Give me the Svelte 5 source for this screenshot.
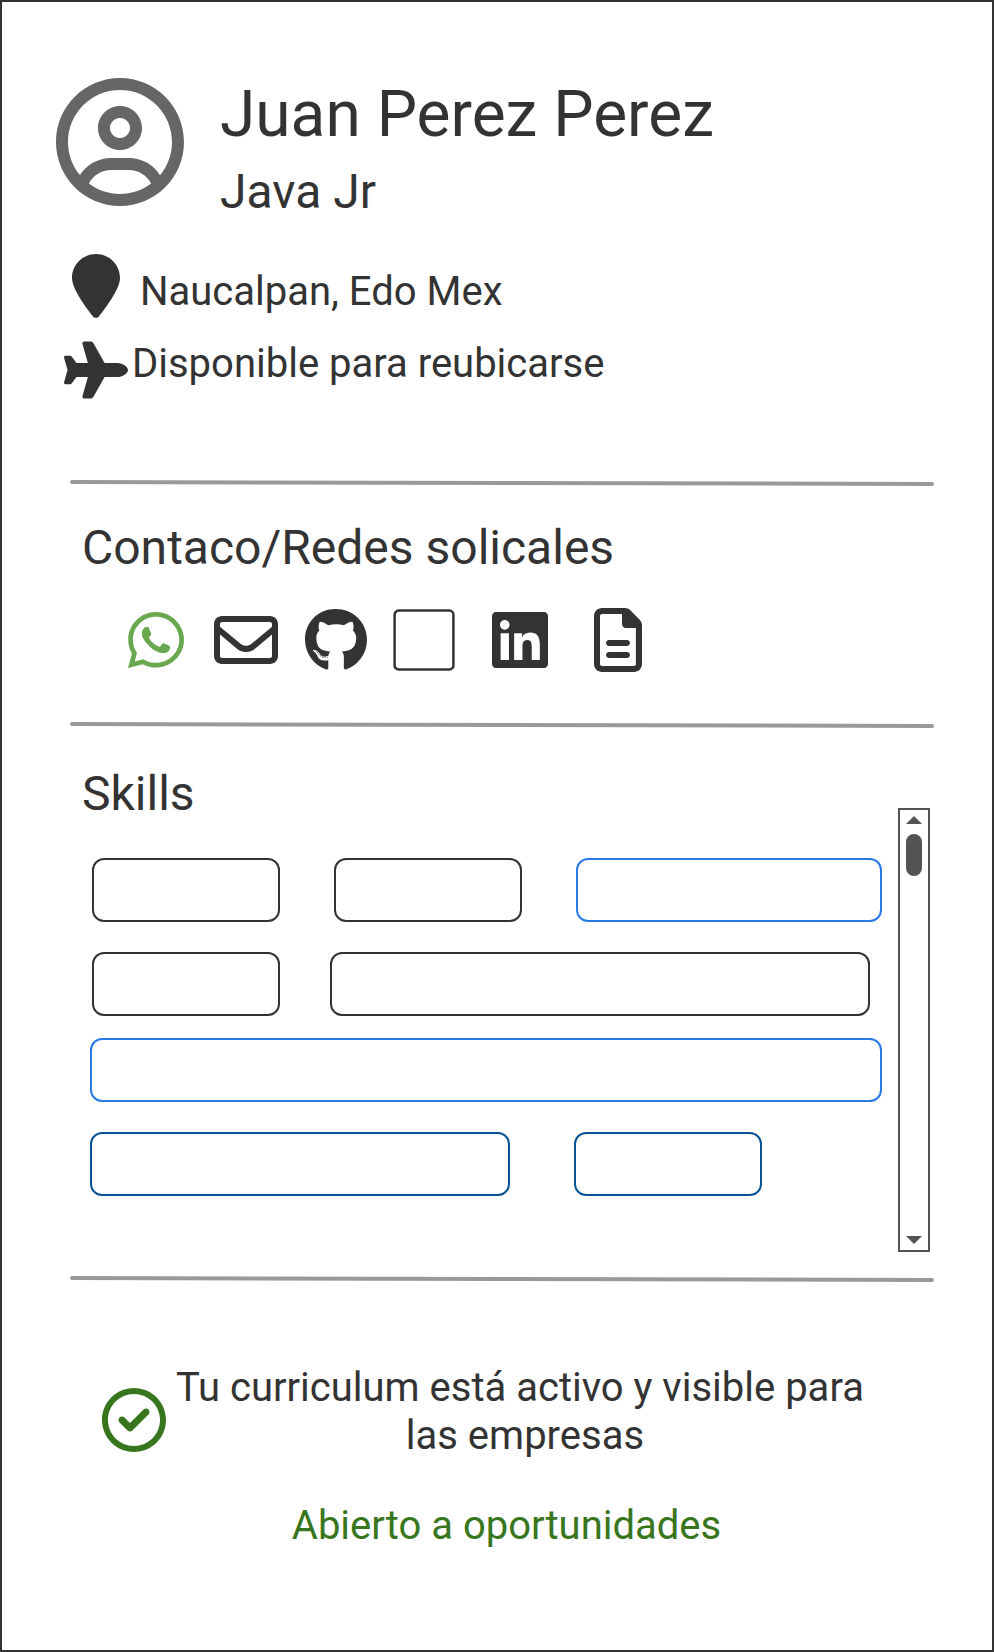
<script>
  const icons = {
    user: {
      box: '0 0 512 512',
      d: 'M256 112c-48.6 0-88 39.4-88 88C168 248.6 207.4 288 256 288s88-39.4 88-88C344 151.4 304.6 112 256 112zM256 240c-22.06 0-40-17.95-40-40C216 177.9 233.9 160 256 160s40 17.94 40 40C296 222.1 278.1 240 256 240zM256 0C114.6 0 0 114.6 0 256s114.6 256 256 256s256-114.6 256-256S397.4 0 256 0zM256 464c-46.73 0-89.76-15.68-124.5-41.79C148.8 389 182.4 368 220.2 368h71.69c37.75 0 71.31 21.01 88.68 54.21C345.8 448.3 302.7 464 256 464zM416.2 388.5C389.2 346.3 343.2 320 291.8 320H220.2c-51.36 0-97.35 26.25-124.4 68.48C65.96 352.5 48 306.3 48 256c0-114.7 93.31-208 208-208s208 93.31 208 208C464 306.3 446 352.5 416.2 388.5z'
    },
    pin: {
      box: '0 0 384 512',
      d: 'M384 192C384 279.4 267 435 215.7 499.2C203.4 514.5 180.6 514.5 168.3 499.2C116.1 435 0 279.4 0 192C0 85.96 85.96 0 192 0C298 0 384 85.96 384 192H384z'
    },
    plane: {
      box: '0 0 576 512',
      d: 'M482.3 192C516.5 192 576 221 576 256C576 292 516.5 320 482.3 320H365.7L265.2 495.9C259.5 505.8 248.9 512 237.4 512H181.2C170.6 512 162.9 501.8 165.8 491.6L214.9 320H112L68.8 377.6C65.78 381.6 61.04 384 56 384H14.03C6.284 384 0 377.7 0 369.1C0 368.7 .1818 367.4 .5398 366.1L32 256L.5398 145.9C.1818 144.6 0 143.3 0 142C0 134.3 6.284 128 14.03 128H56C61.04 128 65.78 130.4 68.8 134.4L112 192H214.9L165.8 20.4C162.9 10.17 170.6 0 181.2 0H237.4C248.9 0 259.5 6.153 265.2 16.12L365.7 192H482.3z'
    },
    whatsapp: {
      box: '0 0 448 512',
      d: 'M380.9 97.1C339 55.1 283.2 32 223.9 32c-122.4 0-222 99.6-222 222 0 39.1 10.2 77.3 29.6 111L0 480l117.7-30.9c32.4 17.7 68.9 27 106.1 27h.1c122.3 0 224.1-99.6 224.1-222 0-59.3-25.2-115-67.1-157zm-157 341.6c-33.2 0-65.7-8.9-94-25.7l-6.7-4-69.8 18.3L72 359.2l-4.4-7c-18.5-29.4-28.2-63.3-28.2-98.2 0-101.7 82.8-184.5 184.6-184.5 49.3 0 95.6 19.2 130.4 54.1 34.8 34.9 56.2 81.2 56.1 130.5 0 101.8-84.9 184.6-186.6 184.6zm101.2-138.2c-5.5-2.8-32.8-16.2-37.9-18-5.1-1.9-8.8-2.8-12.5 2.8-3.7 5.6-14.3 18-17.6 21.8-3.2 3.7-6.5 4.2-12 1.4-32.6-16.3-54-29.1-75.5-66-5.7-9.8 5.7-9.1 16.3-30.3 1.8-3.7.9-6.9-.5-9.7-1.4-2.8-12.5-30.1-17.1-41.2-4.5-10.8-9.1-9.3-12.5-9.5-3.2-.2-6.9-.2-10.6-.2-3.7 0-9.7 1.4-14.8 6.9-5.1 5.6-19.4 19-19.4 46.3 0 27.3 19.9 53.7 22.6 57.4 2.8 3.7 39.1 59.7 94.8 83.8 35.2 15.2 49 16.5 66.6 13.9 10.7-1.6 32.8-13.4 37.4-26.4 4.6-13 4.6-24.1 3.2-26.4-1.3-2.5-5-3.9-10.5-6.6z'
    },
    mail: {
      box: '0 0 512 512',
      d: 'M448 64H64C28.65 64 0 92.65 0 128v256c0 35.35 28.65 64 64 64h384c35.35 0 64-28.65 64-64V128C512 92.65 483.3 64 448 64zM64 112h384c8.822 0 16 7.178 16 16v22.16l-166.8 138.1c-23.19 19.28-59.34 19.27-82.47 .0156L48 150.2V128C48 119.2 55.18 112 64 112zM448 400H64c-8.822 0-16-7.178-16-16V212.7l136.1 113.4C204.3 342.8 229.8 352 256 352s51.75-9.188 71.97-25.98L464 212.7V384C464 392.8 456.8 400 448 400z'
    },
    github: {
      box: '0 0 496 512',
      d: 'M165.9 397.4c0 2-2.3 3.6-5.2 3.6-3.3.3-5.6-1.3-5.6-3.6 0-2 2.3-3.6 5.2-3.6 3-.3 5.6 1.3 5.6 3.6zm-31.1-4.5c-.7 2 1.3 4.3 4.3 4.9 2.6 1 5.6 0 6.2-2s-1.3-4.3-4.3-5.2c-2.6-.7-5.5.3-6.2 2.3zm44.2-1.7c-2.9.7-4.9 2.6-4.6 4.9.3 2 2.9 3.3 5.9 2.6 2.9-.7 4.9-2.6 4.6-4.6-.3-1.9-3-3.2-5.9-2.9zM244.8 8C106.1 8 0 113.3 0 252c0 110.9 69.8 205.8 169.5 239.2 12.8 2.3 17.3-5.6 17.3-12.1 0-6.2-.3-40.4-.3-61.4 0 0-70 15-84.7-29.8 0 0-11.4-29.1-27.8-36.6 0 0-22.9-15.7 1.6-15.4 0 0 24.9 2 38.6 25.8 21.9 38.6 58.6 27.5 72.9 20.9 2.3-16 8.8-27.1 16-33.7-55.9-6.2-112.3-14.3-112.3-110.5 0-27.5 7.6-41.3 23.6-58.9-2.6-6.5-11.1-33.3 2.6-67.9 20.9-6.5 69 27 69 27 20-5.6 41.5-8.5 62.8-8.5s42.8 2.9 62.8 8.5c0 0 48.1-33.6 69-27 13.7 34.7 5.2 61.4 2.6 67.9 16 17.7 25.8 31.5 25.8 58.9 0 96.5-58.9 104.2-114.8 110.5 9.2 7.9 17 22.9 17 46.4 0 33.7-.3 75.4-.3 83.6 0 6.5 4.6 14.4 17.3 12.1C428.2 457.8 496 362.9 496 252 496 113.3 383.5 8 244.8 8zM97.2 352.9c-1.3 1-1 3.3.7 5.2 1.6 1.6 3.9 2.3 5.2 1 1.3-1 1-3.3-.7-5.2-1.6-1.6-3.9-2.3-5.2-1zm-10.8-8.1c-.7 1.3.3 2.9 2.3 3.9 1.6 1 3.6.7 4.3-.7.7-1.3-.3-2.9-2.3-3.9-2-.6-3.6-.3-4.3.7zm32.4 35.6c-1.6 1.3-1 4.3 1.3 6.2 2.3 2.3 5.2 2.6 6.5 1 1.3-1.3.7-4.3-1.3-6.2-2.2-2.3-5.2-2.6-6.5-1zm-11.4-14.7c-1.6 1-1.6 3.6 0 5.9 1.6 2.3 4.3 3.3 5.6 2.3 1.6-1.3 1.6-3.9 0-6.2-1.4-2.3-4-3.3-5.6-2z'
    },
    linkedin: {
      box: '0 0 448 512',
      d: 'M416 32H31.9C14.3 32 0 46.5 0 64.3v383.4C0 465.5 14.3 480 31.9 480H416c17.6 0 32-14.5 32-32.3V64.3c0-17.8-14.4-32.3-32-32.3zM135.4 416H69V202.2h66.5V416zm-33.2-243c-21.3 0-38.5-17.3-38.5-38.5S80.9 96 102.2 96c21.2 0 38.5 17.3 38.5 38.5 0 21.3-17.2 38.5-38.5 38.5zm282.1 243h-66.4V312c0-24.8-.5-56.7-34.5-56.7-34.6 0-39.9 27-39.9 54.9V416h-66.4V202.2h63.7v29.2h.9c8.9-16.8 30.6-34.5 62.2-34.5 66.5 0 78.9 43.8 78.9 100.9V416z'
    },
    file: {
      box: '0 0 384 512',
      d: 'M365.3 93.38l-74.63-74.64C278.6 6.742 262.3 0 245.4 0H64C28.65 0 0 28.65 0 64l.0065 384c0 35.34 28.65 64 64 64H320c35.2 0 64-28.8 64-64V138.6C384 121.7 377.3 105.4 365.3 93.38zM336 448c0 8.836-7.164 16-16 16H64.02c-8.838 0-16-7.164-16-16L48 64.13c0-8.836 7.164-16 16-16h160L224 128c0 17.67 14.33 32 32 32h79.1V448zM96 280C96 293.3 106.8 304 120 304h144C277.3 304 288 293.3 288 280S277.3 256 264 256h-144C106.8 256 96 266.8 96 280zM264 352h-144C106.8 352 96 362.8 96 376s10.75 24 24 24h144c13.25 0 24-10.75 24-24S277.3 352 264 352z'
    },
    check: {
      box: '0 0 512 512',
      d: 'M243.8 339.8C232.9 350.7 215.1 350.7 204.2 339.8L140.2 275.8C129.3 264.9 129.3 247.1 140.2 236.2C151.1 225.3 168.9 225.3 179.8 236.2L224 280.4L332.2 172.2C343.1 161.3 360.9 161.3 371.8 172.2C382.7 183.1 382.7 200.9 371.8 211.8L243.8 339.8zM512 256C512 397.4 397.4 512 256 512C114.6 512 0 397.4 0 256C0 114.6 114.6 0 256 0C397.4 0 512 114.6 512 256zM256 48C141.1 48 48 141.1 48 256C48 370.9 141.1 464 256 464C370.9 464 464 370.9 464 256C464 141.1 370.9 48 256 48z'
    }
  };
</script>

{#snippet icon(name)}
  <svg class="icon {name}" viewBox={icons[name].box} aria-hidden="true"><path d={icons[name].d} /></svg>
{/snippet}

{#snippet divider()}
  <svg class="divider" viewBox="0 0 864 6" aria-hidden="true">
    <path d="M2 2L862 4" fill="none" stroke="#999" stroke-width="4" stroke-linecap="round" />
  </svg>
{/snippet}

<main class="card">
  <header class="profile">
    {@render icon('user')}
    <div class="who">
      <h1>Juan Perez Perez</h1>
      <p class="role">Java Jr</p>
    </div>
  </header>

  <div class="place">
    {@render icon('pin')}
    <span>Naucalpan, Edo Mex</span>
  </div>
  <div class="move">
    {@render icon('plane')}
    <span>Disponible para reubicarse</span>
  </div>

  {@render divider()}

  <section class="contact">
    <h2>Contaco/Redes solicales</h2>
    <div class="links">
      {@render icon('whatsapp')}
      {@render icon('mail')}
      {@render icon('github')}
      <svg class="blank" viewBox="0 0 62 62" aria-hidden="true">
        <rect x="1.6" y="1.6" width="58.8" height="58.8" rx="4" fill="none" stroke="#333" stroke-width="2.5" />
      </svg>
      {@render icon('linkedin')}
      {@render icon('file')}
    </div>
  </section>

  {@render divider()}

  <section class="skills">
    <div class="list">
      <h2>Skills</h2>
      <div class="row first"><i class="s"></i><i class="s"></i><i class="m blue"></i></div>
      <div class="row second"><i class="s"></i><i class="l"></i></div>
      <div class="row third"><i class="full blue"></i></div>
      <div class="row fourth"><i class="half navy"></i><i class="s navy"></i></div>
    </div>
    <div class="scroll">
      <svg width="16" height="8" viewBox="0 0 16 8"><path d="M8 0L16 8H0z" /></svg>
      <div class="thumb"></div>
      <svg class="down" width="16" height="8" viewBox="0 0 16 8"><path d="M0 0H16L8 8z" /></svg>
    </div>
  </section>

  {@render divider()}

  <footer>
    <div class="status">
      {@render icon('check')}
      <p>Tu curriculum está activo y visible para<br />&nbsp;las empresas</p>
    </div>
    <p class="open">Abierto a oportunidades</p>
  </footer>
</main>

<style>
  :global(body) {
    background: #fff;
  }
  .card {
    box-sizing: border-box;
    width: 994px;
    height: 1652px;
    border: 2px solid #333;
    padding-top: 72px;
    display: flex;
    flex-direction: column;
    font-family: Roboto, sans-serif;
    font-size: 40px;
    line-height: 48px;
    color: #333;
    background: #fff;
    overflow: hidden;
  }
  h1, h2, p {
    margin: 0;
    font-weight: 400;
  }
  span, h1, h2, p {
    white-space: nowrap;
  }
  h1 {
    font-size: 64px;
    line-height: 82px;
  }
  h2, .role {
    font-size: 48px;
    line-height: 56px;
  }
  .role {
    margin-top: 8px;
  }
  .icon {
    display: block;
    flex: none;
    height: 64px;
    fill: #333;
  }
  .profile {
    display: flex;
    gap: 36px;
    height: 180px;
    padding-left: 54px;
  }
  .user {
    width: 128px;
    height: 128px;
    margin-top: 4px;
    fill: #666;
  }
  .place {
    display: flex;
    gap: 20px;
    height: 86px;
    padding-left: 70px;
  }
  .place span {
    margin-top: 14px;
  }
  .pin, .file {
    width: 48px;
  }
  .move {
    display: flex;
    gap: 4px;
    height: 140px;
    padding-left: 62px;
  }
  .plane {
    width: 64px;
    height: 58px;
    margin-top: 1px;
  }
  .divider {
    display: block;
    flex: none;
    width: 864px;
    height: 6px;
    margin-left: 68px;
  }
  .contact {
    height: 202px;
    padding: 34px 0 0 80px;
  }
  .links {
    display: flex;
    align-items: center;
    margin: 32px 0 0 46px;
  }
  .whatsapp, .linkedin {
    width: 56px;
  }
  .whatsapp {
    fill: #6aa84f;
  }
  .mail {
    width: 64px;
    margin-left: 30px;
  }
  .github {
    width: 62px;
    margin-left: 27px;
  }
  .blank {
    display: block;
    flex: none;
    width: 62px;
    height: 62px;
    margin-left: 26px;
  }
  .linkedin {
    margin-left: 37px;
  }
  .file {
    margin-left: 46px;
  }
  .skills {
    display: flex;
    box-sizing: border-box;
    height: 548px;
    padding: 38px 0 0 80px;
  }
  .list {
    width: 816px;
  }
  .row {
    display: flex;
    box-sizing: border-box;
    height: 64px;
    padding-left: 10px;
  }
  .row i {
    box-sizing: border-box;
    border: 2px solid #333;
    border-radius: 12px;
  }
  .row .blue {
    border-color: #2a79e4;
  }
  .row .navy {
    border-color: #0b5394;
  }
  .s { width: 188px; }
  .m { width: 306px; }
  .l { width: 540px; }
  .full { width: 792px; }
  .half { width: 420px; }
  .first {
    gap: 54px;
    margin-top: 36px;
  }
  .second {
    gap: 50px;
    margin-top: 30px;
  }
  .third {
    margin-top: 22px;
    padding-left: 8px;
  }
  .fourth {
    gap: 64px;
    margin-top: 30px;
    padding-left: 8px;
  }
  .scroll {
    box-sizing: border-box;
    width: 32px;
    height: 444px;
    margin-top: 42px;
    padding: 6px;
    border: 2px solid #545454;
    display: flex;
    flex-direction: column;
    align-items: center;
  }
  .scroll svg {
    display: block;
    fill: #545454;
  }
  .thumb {
    width: 16px;
    height: 42px;
    margin-top: 10px;
    border-radius: 8px;
    background: #545454;
  }
  .scroll .down {
    margin-top: auto;
  }
  footer {
    padding: 82px 0 0 100px;
  }
  .status {
    display: flex;
    gap: 10px;
  }
  .status p {
    text-align: center;
  }
  .check {
    width: 64px;
    margin-top: 24px;
    fill: #38761d;
  }
  .open {
    width: 809px;
    margin-top: 42px;
    text-align: center;
    color: #38761d;
  }
</style>
